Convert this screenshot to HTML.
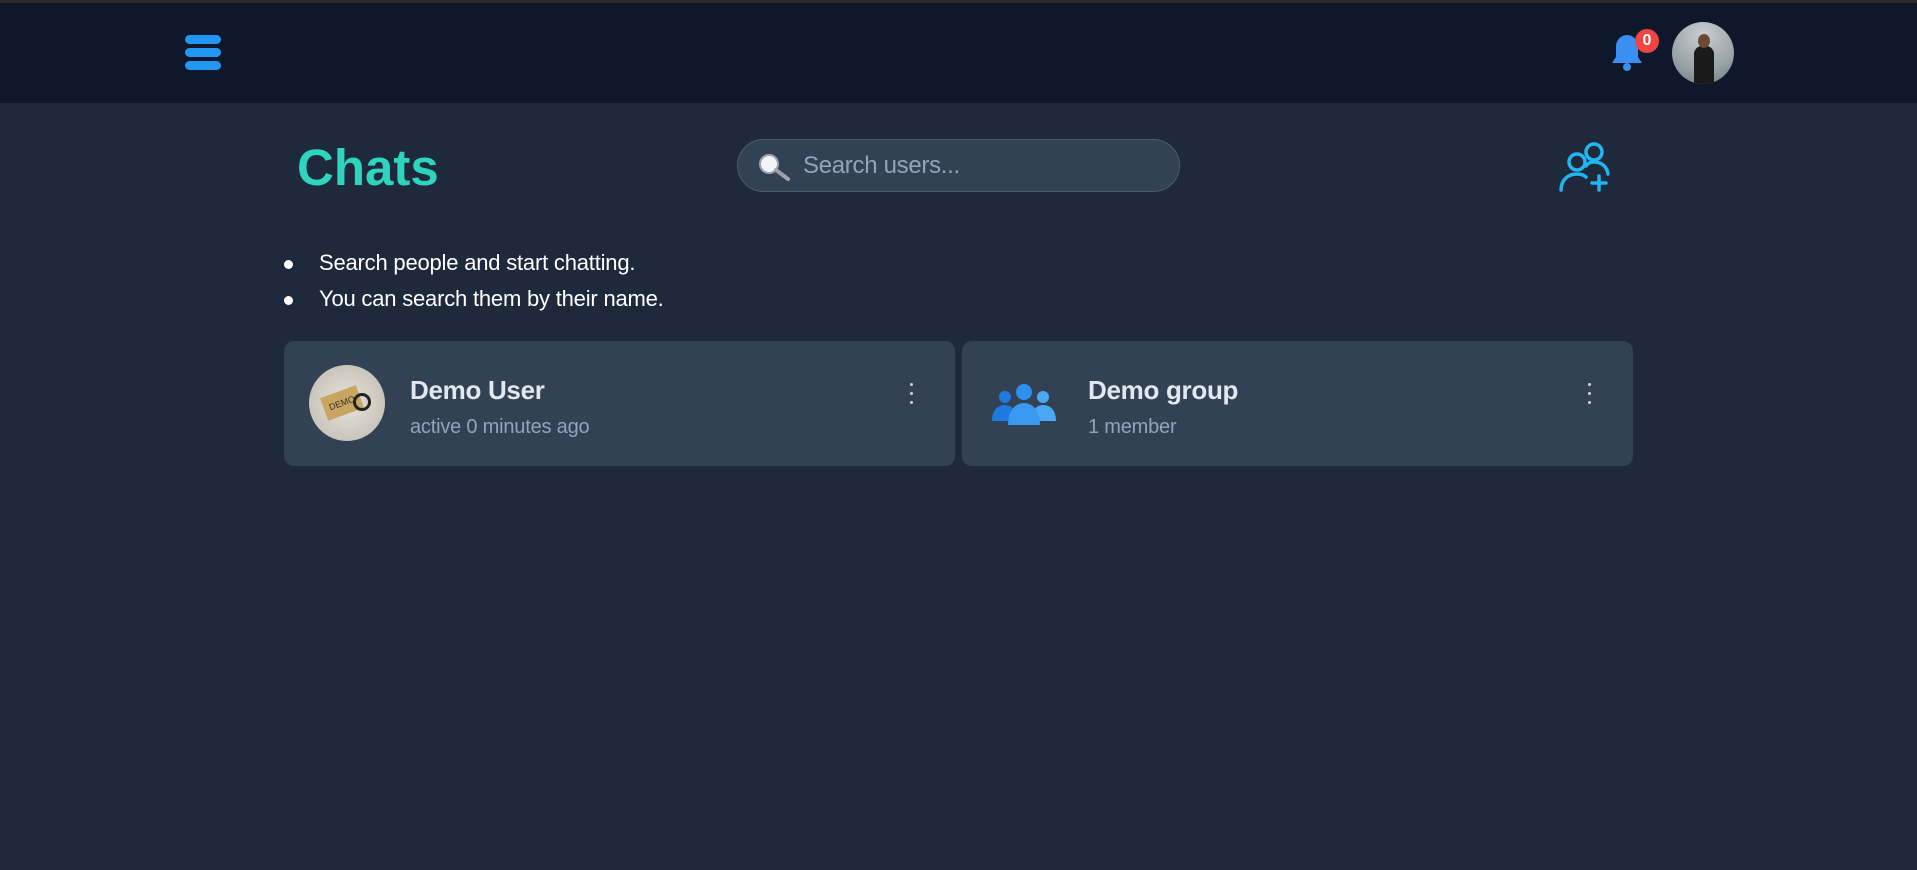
<!DOCTYPE html>
<html><head><meta charset="utf-8"><style>
*{margin:0;padding:0;box-sizing:border-box}
body{width:1917px;height:870px;background:#1e293b;font-family:"Liberation Sans",sans-serif;position:relative;overflow:hidden}
.top{position:absolute;left:0;top:0;width:1917px;height:3px;background:#2b2b2e}
.hdr{position:absolute;left:0;top:3px;width:1917px;height:100px;background:#0f172a}
.ham div{position:absolute;left:185px;width:36px;height:9px;border-radius:5px;background:#2196f3}
.badge{position:absolute;left:1635px;top:29px;width:24px;height:24px;border-radius:12px;background:#ef4444;color:#fff;font-weight:bold;font-size:16px;text-align:center;line-height:24px}
.av{position:absolute;left:1672px;top:22px;width:62px;height:62px;border-radius:50%;background:radial-gradient(circle at 50% 20%,#c9cfd4,#9aa3a8 60%,#6f7a7f);overflow:hidden}
.av::after{content:"";position:absolute;left:22px;top:24px;width:20px;height:40px;background:#1a1a1a;border-radius:8px 8px 0 0}
.av::before{content:"";position:absolute;left:26px;top:12px;width:12px;height:14px;background:#6b4a33;border-radius:50%;z-index:2}
h1{position:absolute;left:297px;top:135px;font-size:51px;font-weight:bold;color:#2dd4bf;line-height:66px}
.search{position:absolute;left:737px;top:139px;width:443px;height:53px;border-radius:27px;background:#334155;border:1px solid #4b5a6d;color:#94a3b8;font-size:24px;line-height:51px;padding-left:65px;letter-spacing:-0.3px}
ul{position:absolute;left:319px;top:245px;color:#fff;font-size:22px;line-height:36px;list-style:none;letter-spacing:-0.2px}
li{position:relative}
li::before{content:"";position:absolute;left:-35px;top:15px;width:9px;height:9px;border-radius:50%;background:#fff}
.card{position:absolute;top:341px;width:671px;height:125px;background:#334155;border-radius:10px}
.name{position:absolute;left:126px;top:34px;font-size:26px;font-weight:bold;color:#e2e8f0;letter-spacing:-0.3px}
.sub{position:absolute;left:126px;top:75px;font-size:20px;color:#94a3b8;letter-spacing:-0.2px}
.dots{position:absolute;left:626px;top:42px;width:4px}
.dots i{display:block;width:3px;height:3px;background:#cbd5e1;border-radius:50%;margin-bottom:6px}
</style></head><body>
<div class="top"></div>
<div class="hdr"></div>
<div class="ham"><div style="top:35px"></div><div style="top:48px"></div><div style="top:61px"></div></div>
<svg style="position:absolute;left:1610px;top:33px" width="34" height="40" viewBox="0 0 34 40"><path d="M17 2c-7 0-11 6-11 12v10l-4 6h30l-4-6V14C28 8 24 2 17 2z" fill="#3b8ff0"/><circle cx="17" cy="34" r="4" fill="#3b8ff0"/></svg>
<div class="badge">0</div>
<div class="av"></div>
<h1>Chats</h1>
<div class="search">Search users...</div>
<svg style="position:absolute;left:758px;top:153px" width="34" height="28" viewBox="0 0 34 28"><circle cx="11" cy="11" r="9" fill="#f1f5f9" stroke="#9ca3af" stroke-width="2"/><path d="M18 17l12 9" stroke="#9ca3af" stroke-width="4" stroke-linecap="round"/></svg>
<svg style="position:absolute;left:1557px;top:140px" width="54" height="54" viewBox="0 0 54 54" fill="none" stroke="#22b5f0" stroke-width="3.5" stroke-linecap="round"><circle cx="37" cy="12" r="8"/><circle cx="20" cy="22" r="8"/><path d="M4 50c0-10 7-16 16-16 4 0 7 1 9 3"/><path d="M29 26c2-3 5-4 8-4 8 0 13 5 14 12"/><path d="M42 36v14M35 43h14"/></svg>
<ul><li>Search people and start chatting.</li><li>You can search them by their name.</li></ul>
<div class="card" style="left:284px">
<div style="position:absolute;left:25px;top:24px;width:76px;height:76px;border-radius:50%;background:radial-gradient(circle,#e8e4dc,#bdb8ae);overflow:hidden"><div style="position:absolute;left:14px;top:26px;width:38px;height:24px;background:#c8a560;transform:rotate(-20deg);font-size:9px;color:#333;text-align:center;line-height:24px">DEMO</div><div style="position:absolute;left:44px;top:28px;width:18px;height:18px;border:3px solid #222;border-radius:50%"></div></div>
<div class="name">Demo User</div><div class="sub">active 0 minutes ago</div>
<div class="dots"><i></i><i></i><i></i></div></div>
<div class="card" style="left:962px">
<svg style="position:absolute;left:28px;top:42px" width="68" height="44" viewBox="0 0 68 44"><circle cx="34" cy="9" r="8" fill="#2f8ff0"/><circle cx="15" cy="14" r="6" fill="#1f7ae0"/><circle cx="53" cy="14" r="6" fill="#4aa8f5"/><path d="M2 38c0-10 5-16 13-16 4 0 7 2 8 4l-3 12z" fill="#1f7ae0"/><path d="M66 38c0-10-5-16-13-16-4 0-7 2-8 4l3 12z" fill="#4aa8f5"/><path d="M18 42c0-14 7-22 16-22s16 8 16 22z" fill="#3a9af2"/></svg>
<div class="name">Demo group</div><div class="sub">1 member</div>
<div class="dots"><i></i><i></i><i></i></div></div>
</body></html>
